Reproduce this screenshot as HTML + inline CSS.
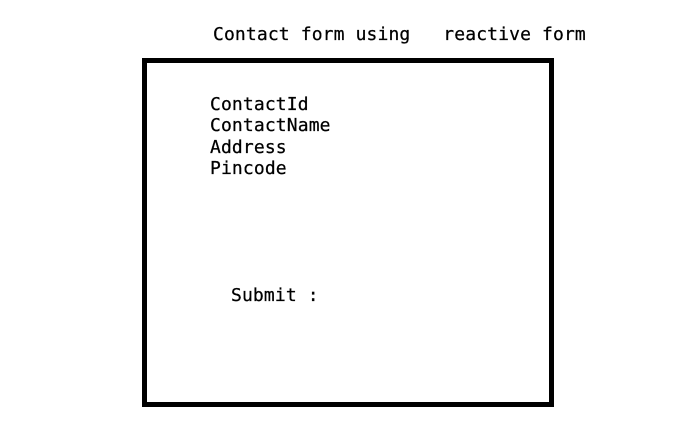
<!DOCTYPE html>
<html><head><style>
body{margin:0;width:695px;height:425px;background:#fff;position:relative;font-family:"DejaVu Sans Mono","Liberation Mono",monospace;font-size:18px;letter-spacing:0.13px;color:#000;overflow:hidden;-webkit-text-stroke:0.25px #000}
.t{position:absolute;white-space:pre;line-height:21.3px}
.box{position:absolute;left:142px;top:58px;width:402px;height:339px;border:5px solid #000}
</style></head><body>
<div class="t" style="left:213px;top:24px">Contact form using   reactive form</div>
<div class="box"></div>
<div class="t" style="left:210px;top:94px">ContactId
ContactName
Address
Pincode</div>
<div class="t" style="left:231px;top:285px">Submit :</div>
</body></html>
